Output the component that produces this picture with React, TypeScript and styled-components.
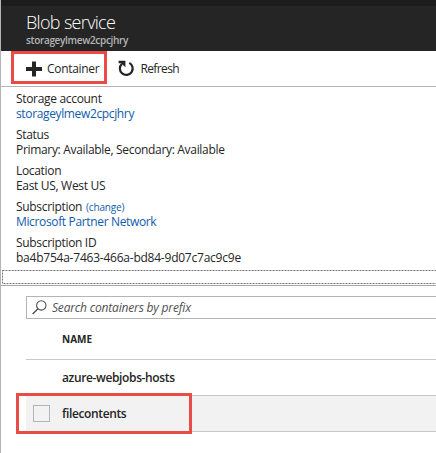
import React from 'react';
import styled, { createGlobalStyle, css } from 'styled-components';

const GlobalStyle = createGlobalStyle`
  * { box-sizing: border-box; }
  body {
    margin: 0;
    background: #fff;
    color: #252525;
    font-family: "Open Sans", "Noto Sans", sans-serif;
    font-size: 12px;
    overflow: hidden;
  }
`;

const Blade = styled.main`
  position: relative;
  width: 436px;
  height: 453px;
  overflow: hidden;
  display: flex;
  flex-direction: column;
  border-left: 1px solid #b4b4b4;
`;

const TopStrip = styled.div`
  height: 6px;
  flex: none;
  margin-left: -1px;
  background: #1c1c1c;
`;

const Header = styled.header`
  height: 45px;
  flex: none;
  margin-left: -1px;
  padding: 4px 0 0 25px;
  border-left: 1px solid #484848;
  background: #252525;
`;

const Title = styled.h1`
  margin: 0;
  font-size: 18px;
  line-height: 24px;
  font-weight: 300;
  letter-spacing: -0.68px;
  color: #fff;
`;

const Subtitle = styled.div`
  margin-top: -1px;
  font-size: 10px;
  line-height: 14px;
  font-weight: 600;
  letter-spacing: -0.33px;
  color: #b5b5b5;
`;

const Toolbar = styled.nav`
  height: 36px;
  flex: none;
  display: flex;
  align-items: center;
  gap: 19px;
  padding: 0 0 0 25px;
  border-bottom: 1px solid #b4b4b4;
`;

const Command = styled.button<{ $spacing: number }>`
  display: flex;
  align-items: center;
  gap: 5px;
  padding: 0;
  border: 0;
  background: none;
  color: #252525;
  font: inherit;
  line-height: 16px;
  letter-spacing: ${(p) => p.$spacing}px;
  white-space: nowrap;
`;

const Essentials = styled.dl`
  flex: none;
  height: 183px;
  margin: 0;
  padding: 4px 0 0 15px;
`;

const Property = styled.div`
  height: 36px;
  line-height: 15px;
  white-space: nowrap;
`;

const Label = styled.dt`
  height: 15px;
  letter-spacing: -0.32px;
`;

const Value = styled.dd<{ $link?: boolean; $spacing?: number }>`
  height: 15px;
  margin: 0;
  letter-spacing: ${(p) => p.$spacing ?? -0.32}px;
  ${(p) => p.$link && css`color: #0f5cab;`}
`;

const Change = styled.span`
  margin-left: 4px;
  font-size: 10px;
  line-height: 10px;
  letter-spacing: -0.18px;
  color: #0f5cab;
`;

const Collapser = styled.div`
  flex: none;
  height: 16px;
  padding-left: 1px;
  border-bottom: 1px solid #a6a6a6;
`;

const Dashes = styled.svg`
  display: block;
`;

const SearchBox = styled.div`
  flex: none;
  display: flex;
  align-items: center;
  gap: 5px;
  height: 23px;
  margin: 10px 0 0 25px;
  padding-left: 5px;
  border: 1px solid #b4b4b4;
  border-right: 0;
  color: #505050;
  font-style: italic;
  letter-spacing: -0.18px;
`;

const Table = styled.section`
  flex: none;
  margin-left: 25px;
`;

const Row = styled.div<{ $head?: boolean; $selected?: boolean }>`
  display: flex;
  align-items: center;
  height: ${(p) => (p.$head ? 41 : 36)}px;
  padding-left: 7px;
  border-bottom: 1px solid #c8c8c8;
  background: ${(p) => (p.$selected ? '#f2f2f2' : '#fff')};
`;

const CheckCell = styled.div`
  width: 29px;
`;

const Checkbox = styled.div`
  width: 17px;
  height: 17px;
  border: 1px solid #b4b4b4;
`;

const HeadName = styled.div`
  font-size: 10px;
  font-weight: 700;
`;

const Name = styled.div`
  font-weight: 600;
  letter-spacing: -0.37px;
`;

const Highlight = styled.div<{ $x: number; $y: number; $w: number; $h: number }>`
  position: absolute;
  left: ${(p) => p.$x - 1}px;
  top: ${(p) => p.$y}px;
  width: ${(p) => p.$w}px;
  height: ${(p) => p.$h}px;
  border: 3px solid #e94b46;
  pointer-events: none;
`;

const PlusIcon = () => (
  <svg width="16" height="16" viewBox="0 0 16 16">
    <path d="M6 0.5h4V6h6v4h-6v5.5H6V10H0V6h6z" fill="#252525" />
  </svg>
);

const RefreshIcon = () => (
  <svg width="17" height="17" viewBox="0 0 17 17">
    <path d="M11.3 2.9a6.4 6.4 0 1 1-7.4 1" fill="none" stroke="#252525" strokeWidth="2.2" />
    <path d="M0.6 0.8h6.8v6.4L5.3 5.2 3 3.2H0.6z" fill="#252525" />
  </svg>
);

const SearchIcon = () => (
  <svg width="15" height="15" viewBox="0 0 15 15" fill="none" stroke="#505050">
    <circle cx="9.3" cy="5.4" r="4.7" strokeWidth="1.1" />
    <path d="M6 8.7L.6 14" strokeWidth="1.4" />
  </svg>
);

export default function App() {
  return (
    <>
      <GlobalStyle />
      <Blade>
        <TopStrip />
        <Header>
          <Title>Blob service</Title>
          <Subtitle>storageylmew2cpcjhry</Subtitle>
        </Header>
        <Toolbar>
          <Command $spacing={-0.3}><PlusIcon />Container</Command>
          <Command $spacing={-0.6}><RefreshIcon />Refresh</Command>
        </Toolbar>
        <Essentials>
          <Property>
            <Label>Storage account</Label>
            <Value $link $spacing={-0.36}>storageylmew2cpcjhry</Value>
          </Property>
          <Property>
            <Label>Status</Label>
            <Value>Primary: Available, Secondary: Available</Value>
          </Property>
          <Property>
            <Label>Location</Label>
            <Value>East US, West US</Value>
          </Property>
          <Property>
            <Label>Subscription<Change>(change)</Change></Label>
            <Value $link $spacing={-0.35}>Microsoft Partner Network</Value>
          </Property>
          <Property>
            <Label>Subscription ID</Label>
            <Value $spacing={-0.23}>ba4b754a-7463-466a-bd84-9d07c7ac9c9e</Value>
          </Property>
        </Essentials>
        <Collapser>
          <Dashes width="440" height="14">
            <rect x="0.5" y="0.5" width="460" height="13" fill="none" stroke="#777" strokeDasharray="2 1" />
          </Dashes>
        </Collapser>
        <SearchBox><SearchIcon />Search containers by prefix</SearchBox>
        <Table>
          <Row $head><CheckCell /><HeadName>NAME</HeadName></Row>
          <Row><CheckCell /><Name>azure-webjobs-hosts</Name></Row>
          <Row $selected><CheckCell><Checkbox /></CheckCell><Name>filecontents</Name></Row>
        </Table>
        <Highlight $x={11} $y={51} $w={96} $h={33} />
        <Highlight $x={16} $y={393} $w={176} $h={41} />
      </Blade>
    </>
  );
}
